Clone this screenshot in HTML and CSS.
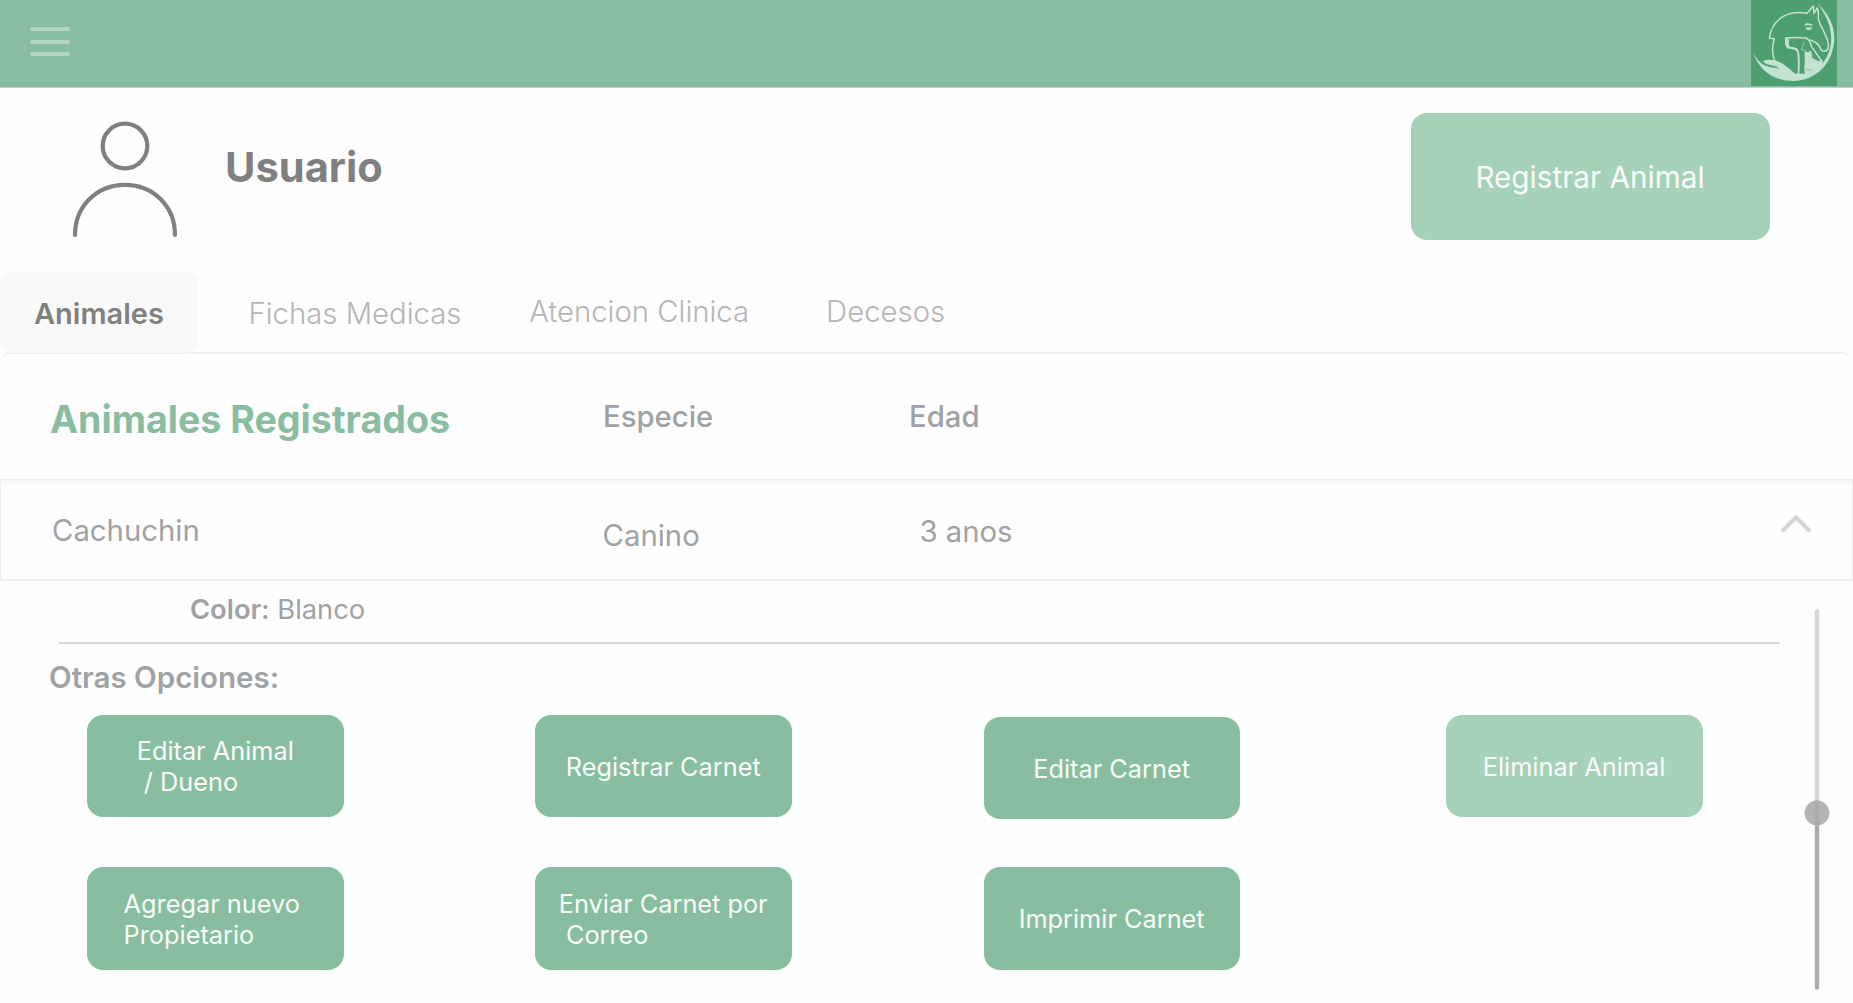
FILE: index.html
```html
<!DOCTYPE html>
<html lang="es">
<head>
<meta charset="utf-8">
<title>Animales Registrados</title>
<link rel="stylesheet" href="styles.css">
</head>
<body>
<header class="topbar">
  <button class="menu" aria-label="Menu"><span></span><span></span><span></span></button>
  <svg class="logo" viewBox="33 0 258 258">
    <rect x="33" y="0" width="258" height="258" fill="#4d9f6f"/>
    <g fill="#c3e2cf">
      <path d="M39 158C50 176 60 190 78 198C92 203 110 202 128 209C142 218 156 222 172 221L200 221C228 213 252 190 263 165C286 112 270 58 231 8C267 42 284 78 283 118C280 190 228 243 160 243C103 243 58 212 39 158Z"/>
      <path d="M70 182C84 177 102 180 118 186C140 196 152 212 168 222L140 228C122 206 112 199 100 197C90 195 78 193 70 186Z"/>
      <path d="M194 152L200 156L207 156L213 151L216 166C214 176 228 180 238 184L243 178L248 184L246 206L196 224C190 206 196 190 194 178Z"/>
      <path d="M194 72C202 67 212 70 218 75L216 79C208 74 202 75 195 77ZM197 83L215 81C216 88 211 91 206 90C201 90 198 88 197 83Z"/>
      <path d="M135 113C134 130 136 142 146 146C158 146 168 148 172 158C174 178 174 200 173 222L178 222C180 196 180 172 177 156C174 142 162 141 150 140C144 134 147 124 148 119Z"/>
    </g>
    <g fill="none" stroke="#c3e2cf" stroke-width="4.5" stroke-linejoin="round" stroke-linecap="round">
      <path d="M106 188C97 164 94 146 103 117L88 114C92 84 108 62 130 49C152 37 178 36 201 40L220 18L222 40L232 24C238 38 233 48 236 60C243 84 260 104 265 130C267 146 262 152 254 154C246 154 242 150 240 142C234 130 222 124 211 120"/>
      <path d="M137 114C154 112 176 112 198 114C212 120 212 134 216 142L246 184"/>
      <path d="M192 126C190 138 186 144 184 149L197 151" stroke-width="2"/>
    </g>
    <path d="M200 212l3 -6M205 213l3 -5M211 214l3 -6" stroke="#4d9f6f" stroke-width="1.5" fill="none"/>
  </svg>
</header>

<section class="profile">
  <svg class="avatar" viewBox="0 0 106 118" fill="none" stroke="#808080" stroke-width="4.2" stroke-linecap="round">
    <circle cx="53" cy="26" r="22.3"/>
    <path d="M3 115C3 86 25 64.8 53 64.8S103 86 103 115"/>
  </svg>
  <h1 class="username">Usuario</h1>
  <button class="btn btn-soft btn-register">Registrar Animal</button>
</section>

<nav class="tabs">
  <a class="tab tab-active">Animales</a>
  <a class="tab tab-files">Fichas Medicas</a>
  <a class="tab tab-clinic">Atencion Clinica</a>
  <a class="tab tab-deaths">Decesos</a>
</nav>

<main>
  <div class="grid-row table-head">
    <h2 class="title">Animales Registrados</h2>
    <div class="col">Especie</div>
    <div class="col">Edad</div>
  </div>
  <div class="grid-row animal">
    <div class="name">Cachuchin</div>
    <div class="species">Canino</div>
    <div class="age">3 anos</div>
    <svg class="chevron" viewBox="0 0 30 18" fill="none" stroke="#d4d4d4" stroke-width="4" stroke-linecap="round" stroke-linejoin="round"><path d="M2.2 15.2L15 2.4L27.8 15.2"/></svg>
  </div>
  <div class="detail">
    <div class="content">
      <p class="color"><b>Color</b><span class="colon">:</span> Blanco</p>
      <hr class="rule">
      <h3 class="options-title">Otras Opciones:</h3>
      <div class="options">
        <button class="btn">Editar Animal<br>&nbsp;/ Dueno</button>
        <button class="btn">Registrar Carnet</button>
        <button class="btn lowered">Editar Carnet</button>
        <button class="btn btn-soft">Eliminar Animal</button>
        <button class="btn btn-owner">Agregar nuevo<br>Propietario</button>
        <button class="btn">Enviar Carnet por<br>&nbsp;Correo</button>
        <button class="btn">Imprimir Carnet</button>
      </div>
    </div>
    <svg class="scroll" viewBox="0 0 26 381">
      <path d="M13 2.2V204" stroke="#d6d6d6" stroke-width="4.4" stroke-linecap="round"/>
      <path d="M13 204V378.5" stroke="#acacac" stroke-width="4.4" stroke-linecap="round"/>
      <circle cx="13" cy="204" r="12.5" fill="#b4b4b4"/>
      <path d="M13 191.5V216.5" stroke="#acacac" stroke-width="4.4"/>
    </svg>
  </div>
</main>
</body>
</html>
```
FILE: styles.css
```css
* { box-sizing: border-box; }
body {
  margin: 0;
  width: 1853px;
  height: 1003px;
  overflow: hidden;
  background: #fefefe;
  color: #9fa2a4;
  font-family: Inter, "Liberation Sans", sans-serif;
  font-size: 29.3px;
}
h1, h2, h3, p { margin: 0; }
button { border: 0; padding: 0; background: none; font: inherit; }

.topbar {
  display: flex;
  justify-content: space-between;
  align-items: flex-start;
  height: 88px;
  padding: 0 16px 0 30px;
  background: #88be9f;
  border-bottom: 1px solid #b5d7c3;
}
.menu { display: grid; gap: 8.4px; padding-top: 27px; }
.menu span { width: 40px; height: 4.2px; border-radius: 2px; background: #b3d2c0; }
.logo { width: 86px; height: 86px; }

.profile { display: flex; align-items: flex-start; height: 183px; padding: 24px 83px 0 72px; }
.avatar { width: 106px; height: 118px; margin-top: 8px; }
.username { margin: 28.6px auto 0 47px; font-size: 41.6px; font-weight: 700; line-height: 52px; color: #808080; }

.btn {
  display: flex;
  justify-content: center;
  align-items: center;
  height: 102.4px;
  padding-right: 1px;
  border-radius: 16px;
  background: #88be9f;
  color: #f8fcfa;
  font-size: 25.3px;
  line-height: 31px;
  text-align: left;
}
.btn-soft { background: #a6d1b9; }
.btn-register { width: 359px; height: 127.5px; margin-top: 0.5px; padding-top: 2px; font-size: 29.7px; }

.tabs { display: flex; height: 82px; color: #b5b5b5; font-weight: 360; line-height: 36px; }
.tab { padding-top: 24.5px; }
.tab-active { width: 198px; padding-left: 34px; border-radius: 14px; background: #f9f9f9; color: #808080; font-size: 29px; font-weight: 600; }
.tab-files { margin-left: 50.5px; }
.tab-clinic { margin-left: 67.8px; padding-top: 22.5px; }
.tab-deaths { margin-left: 77px; padding-top: 22.5px; }

.grid-row { display: grid; grid-template-columns: 552px 306px 1fr auto; align-items: start; }
.table-head { height: 127px; margin-top: -1px; border-top: 2px solid #efefef; border-radius: 10px 10px 0 0; padding-left: 51px; font-weight: 450; line-height: 36px; background: #fefefe; }
.title { padding-top: 42.9px; margin-left: -1px; font-size: 37.6px; font-weight: 700; line-height: 46px; color: #88be9f; }
.col { padding-top: 45px; }
.animal { height: 102px; padding-left: 51px; border: 1px solid #ebeff2; border-bottom-width: 2px; box-shadow: inset 0 5px #f7f8f9; line-height: 36px; }
.name { padding-top: 33px; }
.species { padding-top: 38px; margin-left: -1.4px; }
.age { padding: 34px 0 0 9.4px; }
.chevron { width: 30px; height: 18px; margin: 35px 41px 0 0; }

.detail { display: flex; justify-content: space-between; padding-right: 22.8px; }
.content { width: 1780px; }
.color { padding: 12px 0 0 190px; font-size: 27.3px; line-height: 34px; }
.color b { font-weight: 600; }
.colon { font-weight: 500; }
.rule { height: 2px; margin: 15px 0 0 58.6px; border: 0; background: #d9d9d9; }
.options-title { padding: 15px 0 0.6px 49px; font-size: 29.5px; font-weight: 640; line-height: 36px; }
.options { display: grid; grid-template-columns: 448px 448.4px 462.4px 257px; row-gap: 48px; padding: 19.4px 0 0 87.4px; }
.options .btn { width: 256.7px; }
.options .lowered { margin-top: 2px; }
.options .btn-owner { padding-right: 8px; }
.scroll { width: 26px; height: 381px; margin-top: 28px; }
```
